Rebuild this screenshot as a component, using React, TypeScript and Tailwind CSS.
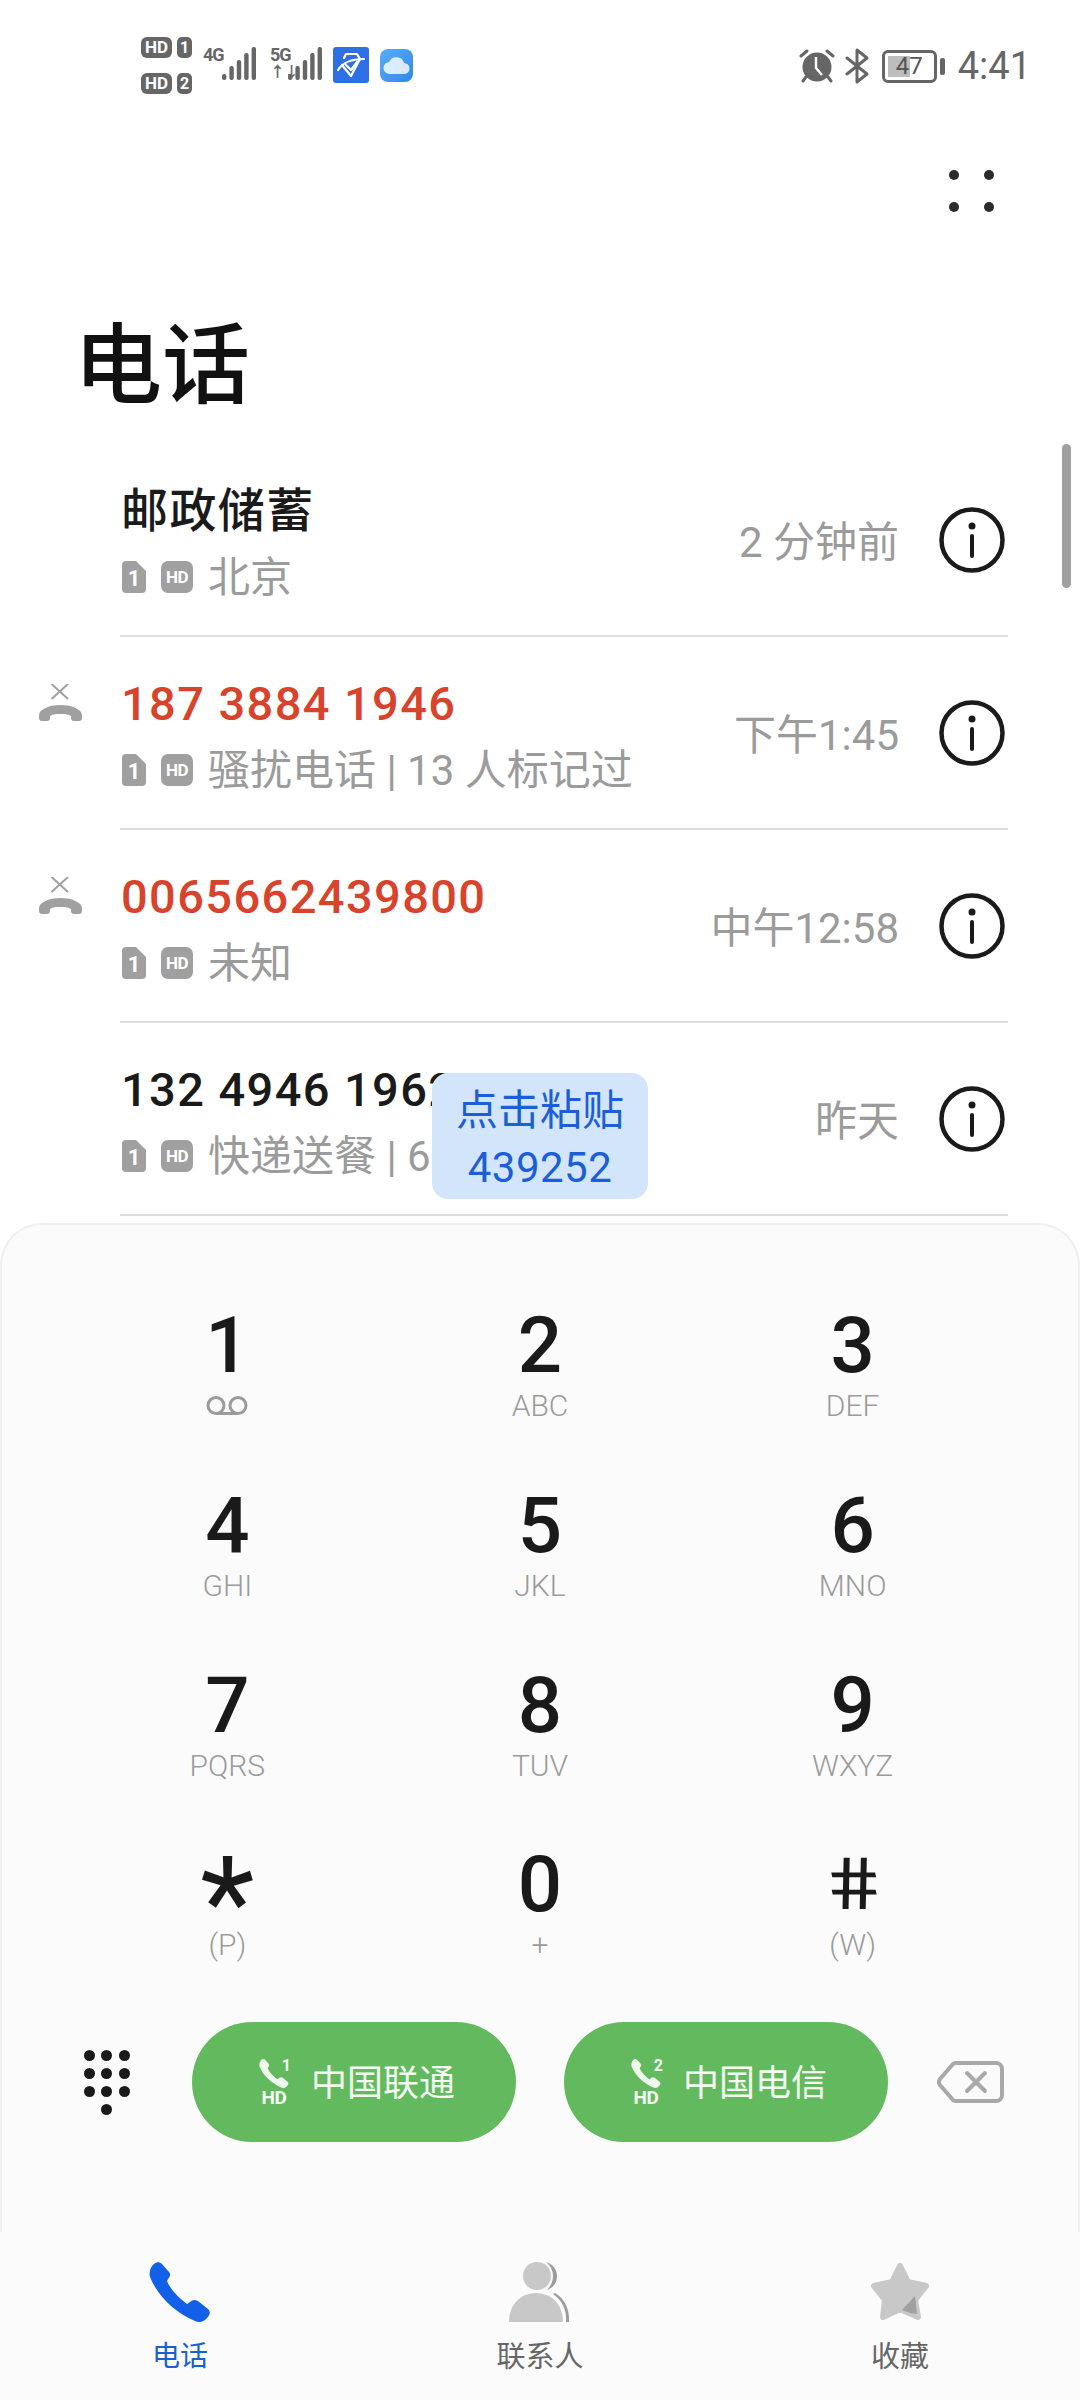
const calls = [
  { name: '邮政储蓄', sub: '北京', time: '2 分钟前' },
  { name: '187 3884 1946', sub: '骚扰电话 | 13 人标记过', time: '下午1:45', missed: true },
  { name: '0065662439800', sub: '未知', time: '中午12:58', missed: true },
  { name: '132 4946 1962', sub: '快递送餐 | 6', time: '昨天' },
]

const keys = [
  { digit: '1', voicemail: true },
  { digit: '2', label: 'ABC' },
  { digit: '3', label: 'DEF' },
  { digit: '4', label: 'GHI' },
  { digit: '5', label: 'JKL' },
  { digit: '6', label: 'MNO' },
  { digit: '7', label: 'PQRS' },
  { digit: '8', label: 'TUV' },
  { digit: '9', label: 'WXYZ' },
  { digit: '*', label: '(P)' },
  { digit: '0', label: '+' },
  { digit: '#', label: '(W)' },
]

function HandsetSmall() {
  return (
    <svg width="30" height="29" viewBox="0 0 62 60" fill="#eef8ec">
      <path d="M3 4C6 0 10-1 13 2l7 8c2 2 1 5-1 7l-1 2c3 8 12 17 20 23l3-2c2-2 5-3 8-1l10 8c3 3 2 6-1 9-3 4-8 5-12 3C25 50 8 33 1 15 0 11 1 7 3 4Z" />
    </svg>
  )
}

function Signal({ width, bars }: { width: number; bars: number[] }) {
  return (
    <svg width={width} height="34" viewBox={`0 0 ${width} 34`} fill="#666">
      {bars.map((h, i) => (
        <rect key={i} x={i * 7.4} y={33 - h} width="4.4" height={h} rx="2" />
      ))}
    </svg>
  )
}

function HdTag({ n }: { n: string }) {
  return (
    <div className="flex items-center gap-[5px]">
      <span className="flex h-[21px] w-[31px] items-center justify-center rounded-[6px] bg-[#666] text-[17px] leading-none font-bold text-white">HD</span>
      <span className="flex h-[21px] w-[15px] items-center justify-center rounded-[5px] bg-[#666] text-[16px] leading-none font-bold text-white">{n}</span>
    </div>
  )
}

function StatusBar() {
  return (
    <div className="flex h-[130px] shrink-0 justify-between pt-[37px] pr-[49px] pl-[141px]">
      <div className="flex items-start">
        <div className="flex flex-col gap-[15px]">
          <HdTag n="1" />
          <HdTag n="2" />
        </div>
        <div className="mt-[10px] ml-[11px] flex items-start">
          <span className="w-[19px] text-[18px] leading-[16px] font-bold tracking-[-1px] text-[#666]">4G</span>
          <Signal width="35" bars={[6, 14, 20, 27, 33]} />
        </div>
        <div className="relative mt-[10px] ml-[13px] flex items-start">
          <span className="w-[18px] text-[18px] leading-[16px] font-bold tracking-[-1px] text-[#666]">5G</span>
          <span className="w-0 translate-x-[-18px] translate-y-[18px] text-[15px] leading-[14px] font-bold tracking-[-1px] whitespace-nowrap text-[#666]">↑↓</span>
          <Signal width="35" bars={[6, 14, 20, 27, 33]} />
        </div>
        <div className="mt-[10px] ml-[10px] flex h-[36px] w-[36px] items-center justify-center rounded-[3px] bg-[#2f6fe6]">
          <svg width="28" height="26" viewBox="0 0 28 26" fill="none" stroke="#fff" strokeWidth="2.2" strokeLinejoin="round" strokeLinecap="round">
            <path d="M7 6 9 2h11l3 5-9 17L5 13" />
            <path d="M1 18C6 10 16 7 27 7" />
            <path d="M9 13l5 5 6-8" />
          </svg>
        </div>
        <div className="mt-[12px] ml-[11px] flex h-[33px] w-[33px] items-center justify-center rounded-[8px] bg-gradient-to-br from-[#5aaef5] to-[#2f86ee]">
          <svg width="27" height="19" viewBox="0 0 27 19" fill="#fff">
            <path opacity="0.8" d="M7 18a6 6 0 0 1-1-12 8 8 0 0 1 15 1 5.500 5.500 0 0 1 0 11Z" />
            <ellipse cx="8" cy="12.500" rx="6" ry="5" fill="#dbeefd" />
          </svg>
        </div>
      </div>
      <div className="mt-[11px] flex h-[36px] items-center">
        <svg width="36" height="34" viewBox="0 0 36 34" className="mr-[10px]">
          <circle cx="18" cy="18" r="14.500" fill="#666" />
          <path d="M17 8v11l6 7" fill="none" stroke="#fff" strokeWidth="2.400" />
          <path d="M2 7l6-5M34 7l-6-5M7 28l-3 4M29 28l3 4" stroke="#666" strokeWidth="3" strokeLinecap="round" />
        </svg>
        <svg width="24" height="36" viewBox="0 0 24 36" fill="none" stroke="#666" strokeWidth="3" strokeLinejoin="round" strokeLinecap="round">
          <path d="M2 26 22 10 12 2v32l10-8L2 10" />
        </svg>
        <div className="ml-[13px] flex h-[33px] w-[55px] overflow-hidden rounded-[6px] border-[3px] border-[#666]">
          <div className="relative h-full w-full p-[3px]">
            <div className="h-full w-[22px] bg-[#bdbdbd]" />
            <span className="absolute inset-0 flex items-center justify-center text-[24px] leading-none text-[#555]">47</span>
          </div>
        </div>
        <div className="ml-[3px] h-[17px] w-[5px] rounded-[2px] bg-[#666]" />
        <span className="ml-[13px] text-[38px] leading-none text-[#666]">4:41</span>
      </div>
    </div>
  )
}

function CallRow({ call }: { call: (typeof calls)[number] }) {
  return (
    <div className="flex h-[193px]">
      <div className="w-[120px] shrink-0 pt-[47px] pl-[38px]">
        {call.missed && (
          <svg width="45" height="37" viewBox="0 0 45 37" fill="#a0a0a0">
            <path d="M13.500 0 30 15M30 0 13.500 15" stroke="#a0a0a0" strokeWidth="2" fill="none" />
            <path d="M1 31c0-5 9-10 21.500-10S44 26 44 31v3c0 2-1 3-3 3h-5c-2 0-3-1-3-3v-2c-3-2-7-2-10.500-2s-7.500 0-10.500 2v2c0 2-1 3-3 3H4c-2 0-3-1-3-3Z" />
          </svg>
        )}
      </div>
      <div className="mr-[72px] flex min-w-0 flex-1 justify-between border-b-2 border-[#dedede] pr-[3px]">
        <div className="flex flex-col pt-[34px] whitespace-nowrap">
          <div className={`h-[66px] pl-[1px] text-[47px] leading-[66px] font-medium tracking-[1.400px] ${call.missed ? 'text-[#d8432c]' : 'text-[#1a1a1a]'}`}>
            {call.name}
          </div>
          <div className="flex h-[66px] items-center pl-[2px] text-[42px] text-[#9b9b9b]">
            <svg width="24" height="32" viewBox="0 0 24 32" className="mr-[15px] shrink-0">
              <path d="M4 0h10l10 10v18a4 4 0 0 1-4 4H4a4 4 0 0 1-4-4V4a4 4 0 0 1 4-4Z" fill="#a0a0a0" />
              <text x="12" y="25" textAnchor="middle" fontSize="22" fontWeight="700" fill="#fff">1</text>
            </svg>
            <span className="mr-[15px] flex h-[32px] w-[32px] shrink-0 items-center justify-center rounded-[7px] bg-[#a0a0a0] text-[17px] leading-none font-bold tracking-[-0.500px] text-white">HD</span>
            {call.sub}
          </div>
        </div>
        <div className="flex items-center">
          <span className="pt-[5px] text-[42px] text-[#9b9b9b]">{call.time}</span>
          <svg width="66" height="66" viewBox="0 0 66 66" className="ml-[40px]">
            <circle cx="33" cy="33" r="30.500" fill="none" stroke="#1a1a1a" strokeWidth="4.500" />
            <circle cx="33" cy="19" r="3.500" fill="#1a1a1a" />
            <rect x="31" y="27" width="4" height="24" rx="2" fill="#1a1a1a" />
          </svg>
        </div>
      </div>
    </div>
  )
}

function CallButton({ sim, carrier }: { sim: string; carrier: string }) {
  return (
    <button className="flex h-[120px] w-[324px] items-center justify-center rounded-full bg-[#63ba5e] pl-[6px] text-[36px] text-[#f3faf2]">
      <div className="relative mr-[22px] flex w-[30px] flex-col items-center">
        <HandsetSmall />
        <span className="absolute top-[-3px] right-[-2px] text-[16px] leading-[20px] font-bold">{sim}</span>
        <span className="mt-[3px] text-[19px] leading-[14px] font-bold tracking-[-0.500px]">HD</span>
      </div>
      <span className="pt-[3px]">{carrier}</span>
    </button>
  )
}

function KeyGlyph({ digit }: { digit: string }) {
  if (digit === '*') {
    return <div className="h-[80px] translate-y-[18px] text-[126px] leading-[80px] text-[#1a1a1a]">*</div>
  }
  if (digit === '#') {
    return <div className="h-[80px] scale-x-[1.2] skew-x-[10deg] text-[72px] leading-[80px] text-[#1a1a1a]">#</div>
  }
  return <div className="h-[80px] text-[78px] leading-[80px] font-medium text-[#1a1a1a]">{digit}</div>
}

function Dialpad() {
  return (
    <div className="h-[1009px] shrink-0 rounded-t-[42px] border-2 border-b-0 border-[#efefef] bg-[#fbfbfb]">
      <div className="grid auto-rows-[179.750px] grid-cols-3 px-[69px] pt-[78px]">
        {keys.map(key => (
          <div key={key.digit} className="flex flex-col items-center pt-[3px]">
            <KeyGlyph digit={key.digit} />
            {key.voicemail ? (
              <div className="flex h-[36px] items-center pt-[2px]">
                <svg width="42" height="19" viewBox="0 0 42 19" fill="none" stroke="#9b9b9b" strokeWidth="3">
                  <circle cx="10" cy="9.500" r="8" />
                  <circle cx="32" cy="9.500" r="8" />
                  <path d="M10 17.500h22" />
                </svg>
              </div>
            ) : (
              <div className="mt-[2px] h-[36px] text-[30px] leading-[36px] font-light text-[#9b9b9b]">{key.label}</div>
            )}
          </div>
        ))}
      </div>
      <div className="flex items-center pl-[79px]">
        <div className="mr-[59px] grid w-[52px] grid-cols-3 justify-items-center gap-y-[7px]">
          {[1, 2, 3, 4, 5, 6, 7, 8, 9].map(n => (
            <div key={n} className="h-[11px] w-[11px] rounded-full bg-[#1a1a1a]" />
          ))}
          <div className="col-start-2 h-[11px] w-[11px] rounded-full bg-[#1a1a1a]" />
        </div>
        <CallButton sim="1" carrier="中国联通" />
        <div className="w-[48px]" />
        <CallButton sim="2" carrier="中国电信" />
        <svg width="67" height="42" viewBox="0 0 67 42" fill="none" stroke="#a8a8a8" strokeWidth="4" strokeLinejoin="round" strokeLinecap="round" className="ml-[49px]">
          <path d="M19 2h40a6 6 0 0 1 6 6v26a6 6 0 0 1-6 6H19a4 4 0 0 1-3-1L3 24a5 5 0 0 1 0-6L16 3a4 4 0 0 1 3-1Z" />
          <path d="M30 12l18 18M48 12 30 30" />
        </svg>
      </div>
    </div>
  )
}

function TabBar() {
  return (
    <div className="grid h-[168px] grid-cols-3 bg-[#fbfbfb] pt-[30px]">
      <div className="flex flex-col items-center">
        <svg width="62" height="60" viewBox="0 0 62 60" fill="#125fe8">
          <path d="M3 4C6 0 10-1 13 2l7 8c2 2 1 5-1 7l-1 2c3 8 12 17 20 23l3-2c2-2 5-3 8-1l10 8c3 3 2 6-1 9-3 4-8 5-12 3C25 50 8 33 1 15 0 11 1 7 3 4Z" />
        </svg>
        <span className="mt-[15px] text-[28px] leading-[40px] text-[#1a5fd0]">电话</span>
      </div>
      <div className="flex flex-col items-center">
        <svg width="62" height="60" viewBox="0 0 62 60">
          <path d="M37 0c7 2 11 8 11 14 0 7-4 12-10 14 4-4 6-9 6-14S42 4 37 0Z" fill="#9c9c9c" />
          <path d="M46 31c9 5 15 16 14 29h-3c1-12-4-22-13-28Z" fill="#9c9c9c" />
          <ellipse cx="28" cy="14" rx="14" ry="14" fill="#c8c8c8" />
          <path d="M0 60C0 42 12 31 27 31s27 11 27 29Z" fill="#c8c8c8" />
        </svg>
        <span className="mt-[15px] text-[29px] leading-[40px] text-[#666]">联系人</span>
      </div>
      <div className="flex flex-col items-center">
        <svg width="60" height="60" viewBox="0 0 60 60">
          <path d="M30 4 38 20 56 24 45 38 48 55 30 47 13 55 15 38 4 24 22 20Z" fill="#c8c8c8" stroke="#c8c8c8" strokeWidth="6" strokeLinejoin="round" />
          <path d="M32 48 45 34 47 52 40 51Z" fill="#a0a0a0" />
        </svg>
        <span className="mt-[15px] text-[29px] leading-[40px] text-[#666]">收藏</span>
      </div>
    </div>
  )
}

export default function App() {
  return (
    <div className="flex h-[2400px] w-[1080px] flex-col overflow-hidden bg-white font-[Roboto,'Noto_Sans_CJK_SC',sans-serif]">
      <StatusBar />

      <div className="flex h-[122px] shrink-0 justify-end pt-[40px] pr-[86px]">
        <div className="grid h-[42px] grid-cols-2 gap-x-[25px] gap-y-[22px]">
          {[1, 2, 3, 4].map(n => (
            <div key={n} className="h-[10px] w-[10px] rounded-full bg-[#2a2a2a]" />
          ))}
        </div>
      </div>

      <div className="h-[192px] shrink-0 pt-[64px] pl-[74px] text-[88px] leading-[100px] font-medium text-[#111]">电话</div>

      <div className="relative h-[779px] shrink-0">
        {calls.map(call => (
          <CallRow key={call.name} call={call} />
        ))}
        {/* scrollbar + clipboard bubble sit over the list */}
        <div className="absolute top-0 right-[9px] h-[144px] w-[9px] rounded-full bg-[#a0a0a0]" />
        <div className="absolute top-[629px] left-[432px] flex h-[126px] w-[216px] flex-col items-center justify-center rounded-[16px] bg-[#d3e5fa] pt-[5px] text-[42px] leading-[57px] text-[#1a5fd8]">
          <span>点击粘贴</span>
          <span className="tracking-[0.500px]">439252</span>
        </div>
      </div>

      <Dialpad />
      <TabBar />
    </div>
  )
}
